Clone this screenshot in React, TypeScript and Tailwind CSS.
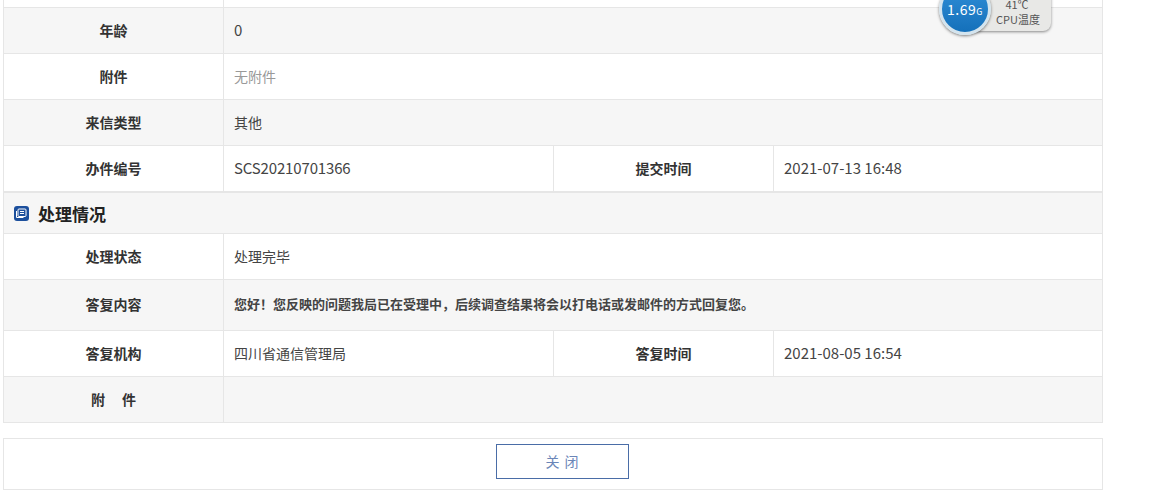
const font = '[font-family:"Noto_Sans_CJK_SC",sans-serif]';

function Label({ children, left, className = '' }: { children: React.ReactNode; left?: boolean; className?: string }) {
  return (
    <div className={`${left ? 'w-[220px] border-l border-[#e6e6e6]' : 'w-[219px]'} shrink-0 flex items-center justify-center font-bold text-[14px] text-[#333] ${className}`}>
      {children}
    </div>
  );
}

function Row({ label, value, gray, h, bold, muted, latin }: { label: string; value?: string; gray?: boolean; h: string; bold?: boolean; muted?: boolean; latin?: boolean }) {
  return (
    <div className={`flex border-b border-[#e6e6e6] ${h} ${gray ? 'bg-[#f6f6f6]' : 'bg-white'}`}>
      <Label className={bold ? 'pb-[2px]' : ''}>{label}</Label>
      <div className={`flex-1 flex items-center pl-[10px] border-l border-[#e6e6e6] ${bold ? 'pb-[2px] font-bold text-[13px]' : latin ? 'text-[15px]' : 'text-[14px]'} ${muted ? 'text-[#999]' : 'text-[#444]'}`}>
        {value}
      </div>
    </div>
  );
}

function DoubleRow({ a, b, c, d, h, latin }: { a: string; b: string; c: string; d: string; h: string; latin?: boolean }) {
  return (
    <div className={`flex border-b border-[#e6e6e6] bg-white ${h}`}>
      <Label>{a}</Label>
      <div className={`w-[330px] shrink-0 flex items-center pl-[10px] ${latin ? 'text-[15px] tracking-[-0.15px]' : 'text-[14px]'} text-[#444] border-l border-[#e6e6e6]`}>{b}</div>
      <Label left>{c}</Label>
      <div className="flex-1 flex items-center pl-[10px] text-[15px] text-[#444] border-l border-[#e6e6e6]">{d}</div>
    </div>
  );
}

export default function App() {
  return (
    <div className={`relative h-[500px] w-[1169px] overflow-hidden bg-white ${font}`}>
      <div className="ml-[3px] w-[1100px] border-x border-[#e6e6e6]">
        <div className="flex h-[8px] border-b border-[#e6e6e6] bg-white">
          <div className="w-[219px] shrink-0" />
          <div className="flex-1 border-l border-[#e6e6e6]" />
        </div>
        <Row label="年龄" value="0" latin gray h="h-[46px]" />
        <Row label="附件" value="无附件" muted h="h-[46px]" />
        <Row label="来信类型" value="其他" gray h="h-[46px]" />
        <DoubleRow a="办件编号" b="SCS20210701366" latin c="提交时间" d="2021-07-13 16:48" h="h-[46px]" />
        <div className="flex h-[42px] items-center gap-[9px] border-y border-[#e6e6e6] bg-[#f6f6f6] pl-[10px]">
          <svg width="15" height="15" viewBox="0 0 15 15">
            <rect width="15" height="15" rx="3" fill="#1c4f9c" />
            <rect x="4" y="3" width="8" height="7.5" rx="1" fill="none" stroke="#fff" />
            <path d="M2.5 5v6.5h7M6 5.5h4M6 7.5h4" fill="none" stroke="#fff" />
          </svg>
          <span className="pt-[2px] text-[17px] font-bold text-[#222]">处理情况</span>
        </div>
        <Row label="处理状态" value="处理完毕" h="h-[46px]" />
        <Row label="答复内容" value="您好！您反映的问题我局已在受理中，后续调查结果将会以打电话或发邮件的方式回复您。" gray bold h="h-[51px]" />
        <DoubleRow a="答复机构" b="四川省通信管理局" c="答复时间" d="2021-08-05 16:54" h="h-[46px]" />
        <Row label="附　 件" gray h="h-[46px]" />
      </div>
      <div className="ml-[3px] mt-[15px] flex h-[52px] w-[1100px] items-start justify-center border border-[#e6e6e6] bg-white pl-[19px] pt-[5px]">
        <button className="h-[35px] w-[133px] border border-[#4a6da7] text-[14px] tracking-[1px] text-[#6b86b8]">关 闭</button>
      </div>
      {/* floating system monitor */}
      <div className="absolute left-[960px] top-[-20px] flex h-[51px] w-[91px] flex-col items-end justify-end rounded-[8px] bg-[#e8e8e6] pb-[4px] pr-[11px] text-[11px] leading-[15px] text-[#555] shadow-[0_1px_3px_rgba(0,0,0,0.45)]">
        <span className="w-[46px] text-center">41℃</span>
        <span className="whitespace-nowrap">CPU温度</span>
      </div>
      <div className="absolute left-[939px] top-[-17px] flex h-[52px] w-[52px] items-baseline justify-center rounded-full border-[3px] border-[#d4e4ee] bg-gradient-to-b from-[#2f8fd8] to-[#1470ba] pt-[13px] text-[14px] leading-[20px] tracking-[0.5px] text-white shadow-[0_1px_3px_rgba(0,0,0,0.5)]">
        1.69<span className="text-[9px]">G</span>
      </div>
    </div>
  );
}
